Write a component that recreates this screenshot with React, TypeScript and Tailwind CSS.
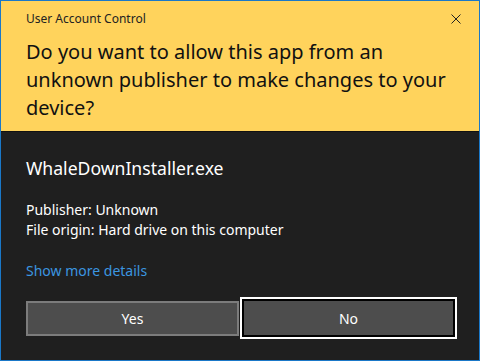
export default function App() {
    return (
        <div
            className="w-[480px] h-[361px] border border-[#1a78c8] bg-[#1f1f1f] flex flex-col"
            style={{ fontFamily: '"Noto Sans", "Open Sans", sans-serif' }}
        >
            <div className="bg-[#ffd35c] h-[131px] pl-[25px] pr-[12px] pt-[8px] relative border-b border-[#111]">
                <div className="text-[12px] leading-[20px] text-[#222]">User Account Control</div>
                <svg className="absolute right-[18px] top-[13px]" width="10" height="10" viewBox="0 0 10 10">
                    <path d="M0.5 0.5 L9.5 9.5 M9.5 0.5 L0.5 9.5" stroke="#222" strokeWidth="1" />
                </svg>
                <div className="mt-[9px] text-[20px] leading-[28px] text-[#111] w-[420px]">
                    Do you want to allow this app from an unknown publisher to make changes to your device?
                </div>
            </div>
            <div className="flex-1 flex flex-col pl-[25px] pt-[24px]">
                <div className="text-[17.6px] leading-[24px] text-white">WhaleDownInstaller.exe</div>
                <div className="mt-[20px] text-[14px] leading-[20px] text-white">
                    <div>Publisher: Unknown</div>
                    <div>File origin: Hard drive on this computer</div>
                </div>
                <div className="mt-[21px] text-[14px] leading-[20px] text-[#3b96e0]">Show more details</div>
                <div className="mt-[20px] flex gap-[1px]">
                    <div className="w-[213px] h-[35px] border-2 border-[#7c7c7c] bg-[#4d4d4d] flex items-center justify-center text-[14px] text-white">
                        Yes
                    </div>
                    <div className="w-[217px] h-[42px] -mt-[4px] border-2 border-white p-[1px] bg-black">
                        <div className="h-full bg-[#4d4d4d] border border-black flex items-center justify-center text-[14px] text-white">
                            No
                        </div>
                    </div>
                </div>
            </div>
        </div>
    )
}
